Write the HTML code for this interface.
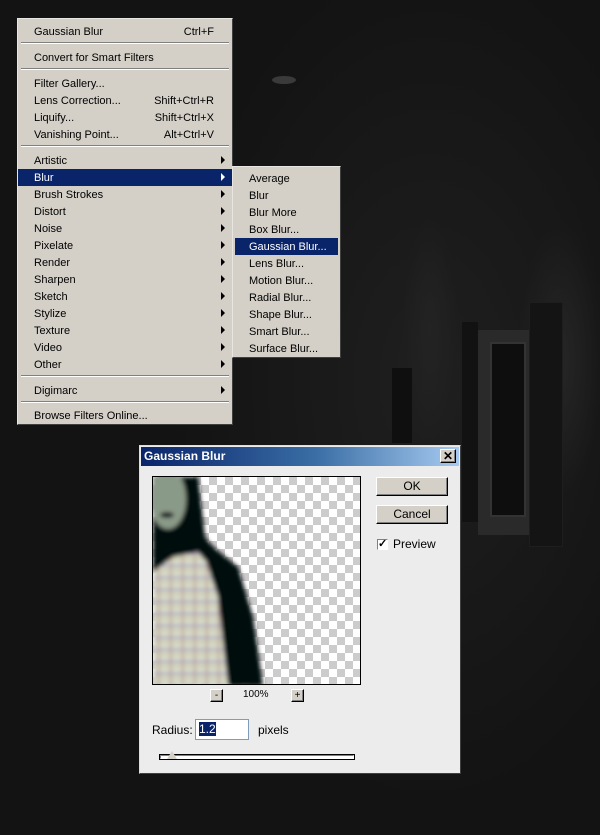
<!DOCTYPE html>
<html><head><style>
*{margin:0;padding:0;box-sizing:border-box}
body{width:600px;height:835px;overflow:hidden;position:relative;font-family:"Liberation Sans",sans-serif;font-size:11px;color:#000;
background:radial-gradient(ellipse 60px 200px at 560px 360px,#262626,rgba(0,0,0,0) 70%),radial-gradient(ellipse 40px 160px at 430px 330px,#232323,rgba(0,0,0,0) 70%),radial-gradient(ellipse 300px 500px at 430px 380px,#1f1f1f,#131313 85%);}
.a{position:absolute}
.menu{background:#d4d0c8;border:1px solid;border-color:#e8e6e0 #404040 #404040 #e8e6e0}
.it{position:absolute;left:0;right:0;height:17px;line-height:18px;padding-left:16px;white-space:nowrap}
.it .k{position:absolute;right:18px;top:0}
.hl{background:#0a246a;color:#fff}
.ar{position:absolute;right:7px;top:4px;width:0;height:0;border-left:4px solid #000;border-top:4px solid transparent;border-bottom:4px solid transparent}
.hl .ar{border-left-color:#fff}
.sep{position:absolute;left:3px;right:3px;height:2px;border-top:1px solid #808080;border-bottom:1px solid #fff}
.btn{position:absolute;background:#d4d0c8;border:1px solid;border-color:#fff #000 #000 #fff;box-shadow:inset -1px -1px #808080;text-align:center;line-height:16px;font-size:12px}
</style></head><body>
<div class="a" style="left:272px;top:76px;width:24px;height:8px;border-radius:50%;background:#3a3a3a"></div>
<div class="a" style="left:392px;top:368px;width:20px;height:75px;background:#0f0f0f"></div>
<div class="a" style="left:462px;top:322px;width:16px;height:200px;background:#121212"></div>
<div class="a" style="left:478px;top:330px;width:52px;height:205px;background:#2a2a2a"></div>
<div class="a" style="left:490px;top:342px;width:36px;height:175px;background:#0e0e0e;border:2px solid #333"></div>
<div class="a" style="left:529px;top:302px;width:34px;height:245px;background:#141414;border:1px solid #1e1e1e"></div>

<div class="a menu" style="left:17px;top:18px;width:216px;height:407px">
<div class="it" style="top:4px">Gaussian Blur<span class="k">Ctrl+F</span></div>
<div class="sep" style="top:23px"></div>
<div class="it" style="top:30px">Convert for Smart Filters</div>
<div class="sep" style="top:49px"></div>
<div class="it" style="top:56px">Filter Gallery...</div>
<div class="it" style="top:73px">Lens Correction...<span class="k">Shift+Ctrl+R</span></div>
<div class="it" style="top:90px">Liquify...<span class="k">Shift+Ctrl+X</span></div>
<div class="it" style="top:107px">Vanishing Point...<span class="k">Alt+Ctrl+V</span></div>
<div class="sep" style="top:126px"></div>
<div class="it" style="top:133px">Artistic<i class="ar"></i></div>
<div class="it hl" style="top:150px">Blur<i class="ar"></i></div>
<div class="it" style="top:167px">Brush Strokes<i class="ar"></i></div>
<div class="it" style="top:184px">Distort<i class="ar"></i></div>
<div class="it" style="top:201px">Noise<i class="ar"></i></div>
<div class="it" style="top:218px">Pixelate<i class="ar"></i></div>
<div class="it" style="top:235px">Render<i class="ar"></i></div>
<div class="it" style="top:252px">Sharpen<i class="ar"></i></div>
<div class="it" style="top:269px">Sketch<i class="ar"></i></div>
<div class="it" style="top:286px">Stylize<i class="ar"></i></div>
<div class="it" style="top:303px">Texture<i class="ar"></i></div>
<div class="it" style="top:320px">Video<i class="ar"></i></div>
<div class="it" style="top:337px">Other<i class="ar"></i></div>
<div class="sep" style="top:356px"></div>
<div class="it" style="top:363px">Digimarc<i class="ar"></i></div>
<div class="sep" style="top:382px"></div>
<div class="it" style="top:388px">Browse Filters Online...</div>
</div>

<div class="a menu" style="left:232px;top:166px;width:109px;height:192px">
<div class="it" style="top:3px">Average</div>
<div class="it" style="top:20px">Blur</div>
<div class="it" style="top:37px">Blur More</div>
<div class="it" style="top:54px">Box Blur...</div>
<div class="it hl" style="top:71px;left:2px;right:2px;padding-left:14px">Gaussian Blur...</div>
<div class="it" style="top:88px">Lens Blur...</div>
<div class="it" style="top:105px">Motion Blur...</div>
<div class="it" style="top:122px">Radial Blur...</div>
<div class="it" style="top:139px">Shape Blur...</div>
<div class="it" style="top:156px">Smart Blur...</div>
<div class="it" style="top:173px">Surface Blur...</div>
</div>

<div class="a" style="left:139px;top:445px;width:322px;height:329px;background:#ececec;border:1px solid;border-color:#ddd #404040 #404040 #ddd">
<div class="a" style="left:1px;top:1px;right:1px;height:19px;background:linear-gradient(90deg,#0a246a,#3a6ea5 55%,#a6caf0);color:#fff;font-weight:bold;font-size:12px;line-height:19px;padding-left:3px">Gaussian Blur</div>
<div class="btn" style="left:300px;top:3px;width:16px;height:14px;line-height:12px;font-size:12px;font-weight:bold">✕</div>
<div class="a" style="left:12px;top:30px;width:209px;height:209px;border:1px solid #000;background-color:#fff;background-image:linear-gradient(45deg,#ccc 25%,transparent 25%,transparent 75%,#ccc 75%),linear-gradient(45deg,#ccc 25%,transparent 25%,transparent 75%,#ccc 75%);background-size:16px 16px;background-position:0 0,8px 8px;overflow:hidden">
 <svg width="209" height="209" style="position:absolute;left:0;top:0">
  <defs><filter id="b"><feGaussianBlur stdDeviation="2"/></filter>
  <pattern id="pl" width="12" height="12" patternUnits="userSpaceOnUse"><rect width="12" height="12" fill="#d8dccc"/><rect y="4" width="12" height="1.5" fill="#8a7ab0"/><rect x="5" width="1.5" height="12" fill="#b08a8a"/><rect y="9" width="12" height="1" fill="#c0b070"/></pattern></defs>
  <g filter="url(#b)">
   <path d="M0 0H45L52 60L60 70L85 90L100 140L110 209H0Z" fill="#050810"/>
   <ellipse cx="15" cy="22" rx="18" ry="30" fill="#8a9a88"/>
   <path d="M0 95L20 80L45 75L62 95L75 209H0Z" fill="url(#pl)"/>
   <path d="M50 60L80 88L95 140L105 209H78L65 120L55 90Z" fill="#050810"/>
   <ellipse cx="14" cy="38" rx="7" ry="3" fill="#111"/>
  </g>
 </svg>
</div>
<div class="btn" style="left:236px;top:31px;width:72px;height:19px">OK</div>
<div class="btn" style="left:236px;top:59px;width:72px;height:19px">Cancel</div>
<div class="a" style="left:237px;top:93px;width:11px;height:11px;border:1px solid;border-color:#808080 #fff #fff #808080;background:#fff;font-size:11px;line-height:9px;text-align:center;font-weight:bold">✓</div>
<div class="a" style="left:253px;top:91px;font-size:12px">Preview</div>
<div class="btn" style="left:70px;top:243px;width:13px;height:13px;line-height:11px;font-size:10px">-</div>
<div class="a" style="left:103px;top:243px;font-size:10px">100%</div>
<div class="btn" style="left:151px;top:243px;width:13px;height:13px;line-height:11px;font-size:10px">+</div>
<div class="a" style="left:12px;top:277px;font-size:12px">Radius:</div>
<div class="a" style="left:55px;top:273px;width:54px;height:21px;background:#fff;border:1px solid #7f9db9;padding:2px 3px"><span style="background:#0a246a;color:#fff;font-size:12px">1.2</span></div>
<div class="a" style="left:118px;top:277px;font-size:12px">pixels</div>
<div class="a" style="left:20px;top:309px;width:194px;height:4px;border:1px solid;border-color:#808080 #fff #fff #808080;background:#fff;box-shadow:0 0 0 1px #000"></div>
<div class="a" style="left:27px;top:305px;width:0;height:0;border-left:5px solid transparent;border-right:5px solid transparent;border-bottom:8px solid #d4d0c8"></div>
</div>
</body></html>
